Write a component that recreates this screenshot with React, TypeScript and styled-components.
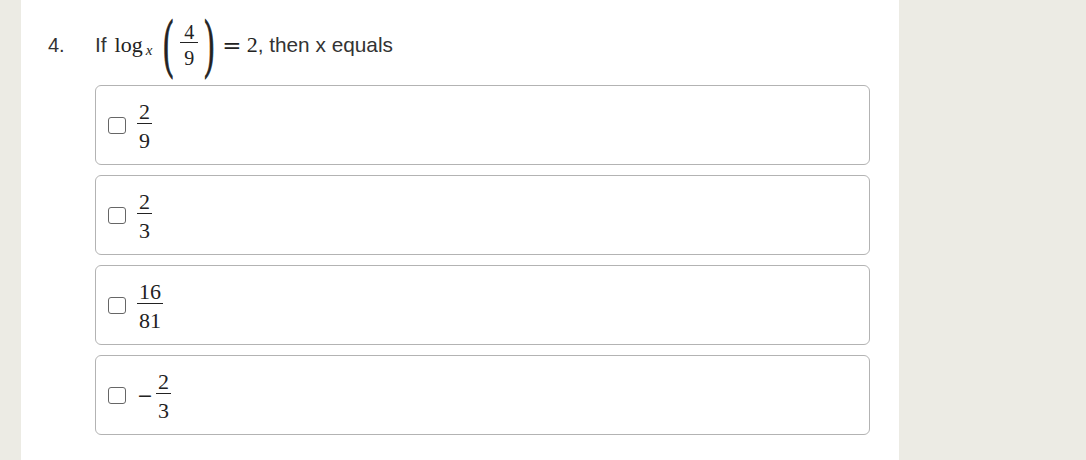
import React from "react";
import styled, { createGlobalStyle } from "styled-components";

const Global = createGlobalStyle`
  html, body { margin: 0; padding: 0; background: #ecebe4; }
  body { font-family: "Liberation Sans", Arial, sans-serif; color: #333; }
`;

const Page = styled.div`
  display: flex;
  height: 460px;
  background: #ecebe4;
`;

const Panel = styled.main`
  margin-left: 21px;
  width: 878px;
  background: #fff;
  box-sizing: border-box;
  padding: 16px 0 0 27px;
`;

const Question = styled.div`
  display: grid;
  grid-template-columns: 47px 775px;
  row-gap: 11px;
`;

const Num = styled.div`
  font-size: 20px;
  display: flex;
  align-items: center;
  height: 58px;
  color: #333;
`;

const Stem = styled.div`
  display: flex;
  align-items: center;
  height: 58px;
  font-size: 20.8px;
  color: #333;
  white-space: pre;
`;

const Serif = styled.span<{ $ml?: number; $mr?: number }>`
  font-family: "Liberation Serif", "Times New Roman", serif;
  font-size: 22px;
  color: #222;
  margin-left: ${(p) => p.$ml ?? 0}px;
  margin-right: ${(p) => p.$mr ?? 0}px;
`;

const Equals = styled.span`
  font-family: "DejaVu Serif", serif;
  font-size: 23px;
  line-height: 1;
  color: #222;
  margin-right: 5px;
`;

const Sub = styled.span`
  font-family: "Liberation Serif", "Times New Roman", serif;
  font-style: italic;
  font-size: 15px;
  color: #222;
  position: relative;
  top: 5px;
  margin-left: 3px;
`;

const Paren = styled.span<{ $ml: number; $mr: number }>`
  font-family: "Liberation Serif", "Times New Roman", serif;
  font-size: 30px;
  line-height: 1;
  display: inline-block;
  transform: scaleY(2.15);
  color: #222;
  -webkit-text-stroke: 0.5px #222;
  margin-left: ${(p) => p.$ml}px;
  margin-right: ${(p) => p.$mr}px;
  position: relative;
  top: -2px;
`;

const Frac = styled.span<{ $size: number; $gap: number; $pad: number }>`
  font-family: "Liberation Serif", "Times New Roman", serif;
  font-size: ${(p) => p.$size}px;
  line-height: 1;
  display: inline-flex;
  flex-direction: column;
  align-items: center;
  color: #222;
  & > span:first-child {
    align-self: stretch;
    text-align: center;
    padding: 0 ${(p) => p.$pad}px;
    border-bottom: 1px solid #222;
  }
  & > span:last-child {
    padding-top: ${(p) => p.$gap}px;
  }
`;

const Options = styled.div`
  grid-column: 2;
  display: flex;
  flex-direction: column;
  gap: 10px;
`;

const Option = styled.label`
  box-sizing: border-box;
  height: 80px;
  border: 1px solid #b3b3b3;
  border-radius: 6px;
  display: flex;
  align-items: center;
  padding-left: 12px;
  gap: 11px;
`;

const Box = styled.span`
  box-sizing: border-box;
  width: 18px;
  height: 17px;
  border: 1.5px solid #666;
  border-radius: 3px;
  background: #fff;
`;

const Answer = styled.span`
  display: inline-flex;
  align-items: center;
  position: relative;
  top: 1px;
`;

const Minus = styled.span`
  font-family: "DejaVu Serif", serif;
  font-size: 19px;
  color: #222;
  margin-right: 3px;
  position: relative;
  top: -1px;
`;

const options: { neg?: boolean; n: string; d: string }[] = [
  { n: "2", d: "9" },
  { n: "2", d: "3" },
  { n: "16", d: "81" },
  { neg: true, n: "2", d: "3" },
];

export default function App() {
  return (
    <>
      <Global />
      <Page>
        <Panel>
          <Question>
            <Num>4.</Num>
            <Stem>
              If
              <Serif $ml={8}>log</Serif>
              <Sub>x</Sub>
              <Paren $ml={11} $mr={7}>(</Paren>
              <Frac $size={20} $gap={5} $pad={4}>
                <span>4</span>
                <span>9</span>
              </Frac>
              <Paren $ml={6} $mr={8}>)</Paren>
              <Equals>=</Equals>
              <Serif>2</Serif>, then x equals
            </Stem>
            <Options>
              {options.map((o, i) => (
                <Option key={i}>
                  <Box />
                  <Answer>
                    {o.neg && <Minus>−</Minus>}
                    <Frac $size={22} $gap={6} $pad={2}>
                      <span>{o.n}</span>
                      <span>{o.d}</span>
                    </Frac>
                  </Answer>
                </Option>
              ))}
            </Options>
          </Question>
        </Panel>
      </Page>
    </>
  );
}
